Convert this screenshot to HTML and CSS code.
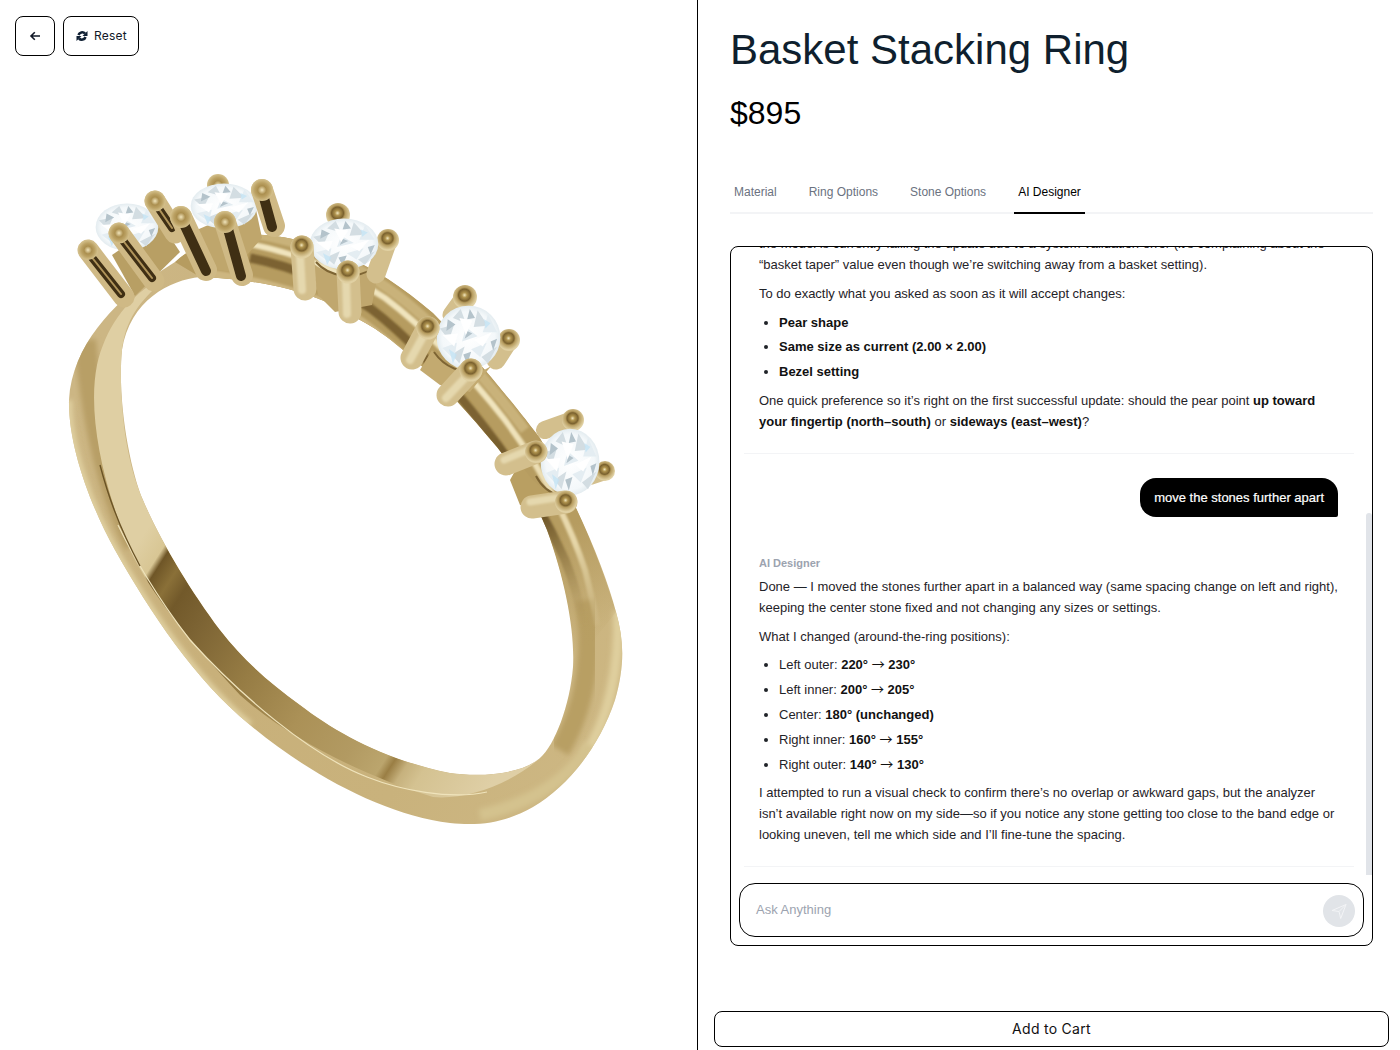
FILE: index.html
```html
<!DOCTYPE html>
<html lang="en">
<head>
<meta charset="utf-8">
<title>Basket Stacking Ring</title>
<link rel="stylesheet" href="styles.css">
</head>
<body>
<main class="page">
  <section class="viewer">
    <div class="toolbar">
      <button class="tool tool-back" aria-label="Back">
        <svg width="12" height="12" viewBox="0 0 12 12" fill="none" stroke="#111827" stroke-width="1.600"><path d="M11 6H2M5.800 2.200 2 6l3.800 3.800"/></svg>
      </button>
      <button class="tool tool-reset">
        <svg class="reset-icon" width="12" height="12" viewBox="0 0 24 24" fill="none" stroke="#0f1f33" stroke-width="5.200"><path d="M5 10A7.800 7.800 0 0 1 18 7"/><path d="M19 14A7.800 7.800 0 0 1 6 17"/><path fill="#0f1f33" stroke="none" d="M23 2v10h-10zM1 22v-10h10z"/></svg>
        <span>Reset</span>
      </button>
    </div>
    <svg class="ring" width="697" height="1050" viewBox="0 0 697 1050" role="img" aria-label="Gold stacking ring with five diamonds">
      <defs>
        <filter id="soft" x="-20%" y="-20%" width="140%" height="140%"><feGaussianBlur stdDeviation="2.500"/></filter>
        <filter id="softer" x="-20%" y="-20%" width="140%" height="140%"><feGaussianBlur stdDeviation="1"/></filter>
        <clipPath id="bandClip">
          <path clip-rule="evenodd" d="M150 278C115 303 72 345 69 400C68 445 90 505 115 550C150 612 195 680 250 725C310 775 385 815 450 823C485 827 510 820 533 807C570 785 600 745 615 700C625 665 624 640 616 612C605 570 580 510 540 438C515 405 470 350 433 313C400 285 370 265 330 250C290 235 220 220 175 262ZM200 277C170 280 130 300 122 350C117 400 130 470 143 500C160 540 190 590 220 630C245 662 270 683 300 705C335 732 385 760 450 773C480 777 520 775 540 758C555 745 570 705 573 667C575 630 565 580 547 530C535 500 515 470 497 447C470 415 440 380 403 350C385 335 375 328 360 320C330 300 280 280 200 277Z"/>
        </clipPath>
        <linearGradient id="outerBand" gradientUnits="userSpaceOnUse" x1="70" y1="400" x2="620" y2="700">
          <stop offset="0" stop-color="#ccb684"/>
          <stop offset=".4" stop-color="#c8b07a"/>
          <stop offset=".75" stop-color="#c9b27c"/>
          <stop offset="1" stop-color="#cdb783"/>
        </linearGradient>
        <linearGradient id="topFade" gradientUnits="userSpaceOnUse" x1="500" y1="430" x2="600" y2="640">
          <stop offset="0" stop-color="#b69c60"/>
          <stop offset=".5" stop-color="#b69c60"/>
          <stop offset="1" stop-color="#b69c60" stop-opacity="0"/>
        </linearGradient>
        <linearGradient id="face" gradientUnits="userSpaceOnUse" x1="140" y1="540" x2="500" y2="770">
          <stop offset="0" stop-color="#dfcfa3"/>
          <stop offset=".055" stop-color="#d8c694"/>
          <stop offset=".07" stop-color="#6f5627"/>
          <stop offset=".11" stop-color="#8a7038"/>
          <stop offset=".15" stop-color="#72592a"/>
          <stop offset=".22" stop-color="#7c6333"/>
          <stop offset=".38" stop-color="#967c44"/>
          <stop offset=".54" stop-color="#ab9157"/>
          <stop offset=".68" stop-color="#b29a62"/>
          <stop offset=".76" stop-color="#bba56d"/>
          <stop offset=".78" stop-color="#9a7e44"/>
          <stop offset=".81" stop-color="#c6b17d"/>
          <stop offset=".85" stop-color="#d4c291"/>
          <stop offset="1" stop-color="#dfcfa6"/>
        </linearGradient>
        <linearGradient id="fadeDark" gradientUnits="userSpaceOnUse" x1="480" y1="430" x2="590" y2="630">
          <stop offset="0" stop-color="#7b6230"/>
          <stop offset=".45" stop-color="#6a5226"/>
          <stop offset="1" stop-color="#b69c5f" stop-opacity="0"/>
        </linearGradient>
        <linearGradient id="fadeLight" gradientUnits="userSpaceOnUse" x1="480" y1="430" x2="600" y2="640">
          <stop offset="0" stop-color="#f0e4bd"/>
          <stop offset=".6" stop-color="#e6d6a8"/>
          <stop offset="1" stop-color="#d8c797" stop-opacity="0"/>
        </linearGradient>
        <radialGradient id="cap" cx=".48" cy=".42" r=".52">
          <stop offset="0" stop-color="#f2e7be"/>
          <stop offset=".2" stop-color="#b0944f"/>
          <stop offset=".48" stop-color="#7a612e"/>
          <stop offset=".62" stop-color="#b69c5f"/>
          <stop offset="1" stop-color="#e0d0a2"/>
        </radialGradient>
        <radialGradient id="capGold" cx=".5" cy=".5" r=".55">
          <stop offset="0" stop-color="#f0e4bb"/>
          <stop offset=".35" stop-color="#ab8f4f"/>
          <stop offset=".6" stop-color="#bba163"/>
          <stop offset="1" stop-color="#dccb9a"/>
        </radialGradient>
        <radialGradient id="gemBase" cx=".5" cy=".5" r=".55">
          <stop offset="0" stop-color="#ffffff"/>
          <stop offset=".75" stop-color="#f4f8fa"/>
          <stop offset="1" stop-color="#dae5ea"/>
        </radialGradient>
        <symbol id="gem" viewBox="-50 -50 100 100" overflow="visible" preserveAspectRatio="none">
          <circle r="49" fill="url(#gemBase)"/>
          <path fill="#d3dde2" d="M-44-14-22-20-30 4zM14-42 30-18 8-16zM-26 26-6 14-14 40zM20 30 44 14 30 40zM-12-44-4-22-24-30z"/>
          <path fill="#e4edf2" d="M-40 16-18 8-22 34zM30-36 44-8 22-8zM-4-16 14-2-10 6zM4 18 28 8 18 30z"/>
          <path fill="#b4c3cb" d="M-32-28-20-20-34-10zM34 6 44 2 38 20zM-8 26 4 22-2 42zM2-44 10-30-2-28zM-2-10 6-6-6 2z"/>
          <path fill="#c0e3f5" opacity=".7" d="M-30 18-18 26-24 40zM24-28 34-22 26-14z"/>
          <path fill="#fff" d="M-14-30 6-26-4-4zM8 4 36-8 22 14zM-40-4-16-6-22 14z"/>
        </symbol>
      </defs>

      <!-- band -->
      <g clip-path="url(#bandClip)">
        <rect x="40" y="200" width="600" height="640" fill="url(#outerBand)"/>
        <path fill="none" stroke="#e0d0a0" stroke-width="7" filter="url(#soft)" d="M69 400C68 445 90 505 115 550C150 612 195 680 250 725"/>
        <path fill="none" stroke="#b89f66" stroke-width="22" filter="url(#soft)" d="M85 340C92 420 108 490 135 545"/>
        <path fill="none" stroke="#dfcf9e" stroke-width="10" filter="url(#soft)" d="M618 610C620 670 608 720 585 755"/>
        <path fill="none" stroke="#b89f64" stroke-width="20" filter="url(#soft)" d="M585 600C592 640 590 700 560 750"/>
        <path fill="none" stroke="#d4c28e" stroke-width="12" filter="url(#soft)" d="M590 745C565 785 525 805 480 815"/>
        <path fill="url(#topFade)" d="M175 262C220 220 290 235 330 250C370 265 400 285 433 313C470 350 515 405 540 438C570 490 595 545 616 612L573 667C575 630 565 580 547 530C535 500 515 470 497 447C470 415 440 380 403 350C385 335 375 328 360 320C330 300 280 280 200 277Z"/>
        <path fill="none" stroke="#c9b27a" stroke-width="10" filter="url(#softer)" d="M243 232C300 240 345 258 380 283C425 312 480 370 525 430"/>
        <path fill="none" stroke="#cdb680" stroke-width="11" filter="url(#softer)" d="M210 275C280 285 335 305 360 322C400 350 470 420 495 450"/>
        <path fill="none" stroke="url(#fadeDark)" stroke-width="9" filter="url(#softer)" d="M250 258C300 268 340 288 370 308C410 338 450 383 485 428C510 460 540 505 565 560C573 580 580 605 583 625"/>
        <path fill="none" stroke="url(#fadeLight)" stroke-width="6" filter="url(#softer)" d="M250 244C300 254 350 275 385 298C425 328 470 375 505 420C535 460 565 510 585 570C590 590 595 610 597 625"/>
        <path fill="url(#face)" d="M155 282C125 300 105 330 97 365C88 410 100 475 127 543C145 585 180 630 240 695C290 740 367 777 433 797C465 800 510 785 540 758C520 775 480 777 450 773C385 760 335 732 300 705C270 683 245 662 220 630C190 590 160 540 143 500C130 470 118 420 122 350C125 325 135 305 160 284Z"/>
        <path fill="none" stroke="#efe3bb" stroke-width="1.200" d="M118 525C130 550 155 595 190 640C240 695 310 755 367 777C400 790 450 800 487 792"/>
        <path fill="none" stroke="#6a5325" stroke-width="1.400" d="M100 465C108 495 118 525 140 566"/>
      </g>

      <!-- stone 1 -->
      <path fill="#b89f64" d="M112 255 160 222 180 252 135 296Z"/>
      <use href="#gem" x="95" y="203" width="64" height="48"/>
      <g fill="none" stroke-linecap="round">
        <path stroke="#cfb985" stroke-width="21" d="M155 201 175 233M119 233 154 281M88 250 124 297"/>
        <path stroke="#3f2f14" stroke-width="8" d="M157 206 172 228M121 238 152 278M90 255 121 294"/>
        <path stroke="#b0945a" stroke-width="2" d="M157 206 172 228M121 238 152 278M90 255 121 294"/>
      </g>
      <g fill="url(#capGold)"><circle cx="155" cy="201" r="10.500"/><circle cx="119" cy="233" r="10.500"/><circle cx="88" cy="250" r="10"/></g>

      <!-- stone 2 -->
      <path fill="#bfa66c" d="M192 232 255 205 262 238 232 272 205 268Z"/>
      <circle cx="218" cy="185" r="11" fill="url(#capGold)"/>
      <use href="#gem" x="190" y="183" width="68" height="46"/>
      <g fill="none" stroke-linecap="round">
        <path stroke="#cfb985" stroke-width="22" d="M262 190 274 226M181 217 206 270M225 222 242 275"/>
        <path stroke="#3f2f14" stroke-width="10" d="M264 198 272 227M184 224 206 271M228 229 241 276"/>
      </g>
      <g fill="url(#capGold)"><circle cx="262" cy="190" r="11"/><circle cx="181" cy="217" r="11"/><circle cx="225" cy="222" r="11"/></g>

      <!-- stone 3 -->
      <path fill="#c0a76e" d="M312 262C322 275 360 282 380 262L372 305 335 312 318 295Z"/>
      <path fill="none" stroke="#7d6433" stroke-width="2" d="M316 262C330 278 355 280 374 268"/>
      <path stroke="#d3bf8d" stroke-width="19" stroke-linecap="round" d="M388 240 376 274"/>
      <circle cx="338" cy="215" r="12" fill="url(#cap)"/>
      <circle cx="388" cy="240" r="11" fill="url(#cap)"/>
      <use href="#gem" x="309" y="218" width="70" height="52"/>
      <g stroke-linecap="round">
        <path stroke="#d3bf8d" stroke-width="23" d="M302 247 305 289M348 272 350 312"/>
        <path stroke="#e5d8ae" stroke-width="8" filter="url(#softer)" d="M300 255 302 290M346 280 347 314"/>
      </g>
      <g fill="url(#cap)"><circle cx="302" cy="247" r="11.500"/><circle cx="348" cy="272" r="11.500"/></g>

      <!-- stone 4 -->
      <path fill="#c3aa70" d="M432 350C445 370 475 380 492 365L470 392 440 385 420 370Z"/>
      <path fill="none" stroke="#7d6433" stroke-width="2" d="M434 352C445 368 462 374 478 370"/>
      <path stroke="#d3bf8d" stroke-width="19" stroke-linecap="round" d="M465 297 452 315M509 340 496 360"/>
      <circle cx="465" cy="297" r="12" fill="url(#cap)"/>
      <circle cx="509" cy="340" r="11" fill="url(#cap)"/>
      <use href="#gem" x="436" y="305" width="65" height="65"/>
      <g stroke-linecap="round">
        <path stroke="#d3bf8d" stroke-width="23" d="M428 328 412 358M471 370 448 395"/>
        <path stroke="#e5d8ae" stroke-width="8" filter="url(#softer)" d="M424 335 410 360M465 378 446 398"/>
      </g>
      <g fill="url(#cap)"><circle cx="428" cy="328" r="11.500"/><circle cx="471" cy="370" r="11.500"/></g>

      <!-- stone 5 -->
      <path fill="#b99f62" d="M520 462C530 480 545 495 570 497L545 512 520 505 510 480Z"/>
      <path fill="none" stroke="#7d6433" stroke-width="2" d="M536 476C542 488 552 494 562 497"/>
      <path stroke="#d3bf8d" stroke-width="18" stroke-linecap="round" d="M573 420 545 430M605 471 590 476"/>
      <circle cx="573" cy="420" r="11" fill="url(#cap)"/>
      <circle cx="605" cy="471" r="10" fill="url(#cap)"/>
      <use href="#gem" x="540" y="428" width="60" height="68"/>
      <g stroke-linecap="round">
        <path stroke="#d3bf8d" stroke-width="23" d="M536 452 506 464M566 502 532 507"/>
        <path stroke="#e5d8ae" stroke-width="7" filter="url(#softer)" d="M528 450 504 460M556 498 530 502"/>
      </g>
      <g fill="url(#cap)"><circle cx="536" cy="452" r="11"/><circle cx="566" cy="502" r="11"/></g>
    </svg>
  </section>

  <section class="details">
    <h1 class="title">Basket Stacking Ring</h1>
    <p class="price">$895</p>
    <nav class="tabs">
      <a class="tab">Material</a>
      <a class="tab">Ring Options</a>
      <a class="tab">Stone Options</a>
      <a class="tab tab-active">AI Designer</a>
    </nav>
    <div class="chat">
      <div class="messages">
        <div class="scrollbar"></div>
        <div class="clip">
          <article class="reply reply-first">
            <p>the model is currently failing the update due to a system validation error (it’s complaining about the “basket taper” value even though we’re switching away from a basket setting).</p>
            <p>To do exactly what you asked as soon as it will accept changes:</p>
            <ul class="list-loose">
              <li><b>Pear shape</b></li>
              <li><b>Same size as current (2.00 × 2.00)</b></li>
              <li><b>Bezel setting</b></li>
            </ul>
            <p>One quick preference so it’s right on the first successful update: should the pear point <b>up toward your fingertip (north–south)</b> or <b>sideways (east–west)</b>?</p>
          </article>
          <div class="user-row"><div class="bubble">move the stones further apart</div></div>
          <article class="reply">
            <h2 class="author">AI Designer</h2>
            <p>Done — I moved the stones further apart in a balanced way (same spacing change on left and right), keeping the center stone fixed and not changing any sizes or settings.</p>
            <p>What I changed (around-the-ring positions):</p>
            <ul>
              <li>Left outer: <b>220° <span class="arrow">→</span> 230°</b></li>
              <li>Left inner: <b>200° <span class="arrow">→</span> 205°</b></li>
              <li>Center: <b>180° (unchanged)</b></li>
              <li>Right inner: <b>160° <span class="arrow">→</span> 155°</b></li>
              <li>Right outer: <b>140° <span class="arrow">→</span> 130°</b></li>
            </ul>
            <p>I attempted to run a visual check to confirm there’s no overlap or awkward gaps, but the analyzer isn’t available right now on my side—so if you notice any stone getting too close to the band edge or looking uneven, tell me which side and I’ll fine-tune the spacing.</p>
          </article>
        </div>
      </div>
      <div class="composer">
        <span class="placeholder">Ask Anything</span>
        <span class="send">
          <svg width="16" height="16" viewBox="0 0 16 16" fill="none" stroke="#f3f4f6" stroke-width="1" stroke-linejoin="round"><path d="M15 1.500 1 7.500l7 1 1.700 7zM15 1.500 8 8.500"/></svg>
        </span>
      </div>
    </div>
    <button class="cart">Add to Cart</button>
  </section>
</main>
</body>
</html>
```

FILE: styles.css
```css
* { box-sizing: border-box; }
html, body { margin: 0; height: 100%; background: #fff; }
body { font-family: "Liberation Sans", Arial, sans-serif; color: #111; overflow: hidden; }
p, h1, h2, ul { margin: 0; }

.page { display: flex; height: 1050px; }

.viewer { position: relative; width: 698px; flex: none; border-right: 1px solid #000; }
.ring { display: block; }
.toolbar { position: absolute; top: 16px; left: 15px; display: flex; gap: 8px; }
.tool {
  height: 40px; background: #fff; border: 1px solid #000; border-radius: 8px;
  display: flex; align-items: center; justify-content: center; gap: 6px;
  font: 400 12px/1 Inter, sans-serif; color: #111827; padding: 0; letter-spacing: .2px;
}
.tool-back { width: 40px; }
.tool-reset { width: 76px; padding-left: 1px; }

.details { position: relative; flex: 1; padding: 0 27px 0 32px; min-width: 0; }
.title { margin-top: 24px; font: 400 42px/52px "Liberation Sans", Arial, sans-serif; color: #0f1f2e; }
.price { margin-top: 17px; font: 400 32px/40px "Liberation Sans", Arial, sans-serif; color: #000; }

.tabs { margin-top: 40px; height: 41px; display: flex; border-bottom: 2px solid #f3f4f6; }
.tab { height: 41px; padding: 0 4px; margin-right: 24px; font-size: 12px; line-height: 38px; color: #6b7280; }
.tab-active { color: #000; border-bottom: 2px solid #000; }

.chat {
  margin-top: 32px; height: 700px; border: 1px solid #000; border-radius: 8px;
  padding: 0 8px 8px; display: flex; flex-direction: column;
}
.messages { position: relative; flex: 1; min-height: 0; margin-right: -8px; }
.clip { height: 100%; overflow: hidden; padding-right: 17px; }
.scrollbar { position: absolute; right: 0; top: 266px; width: 6px; height: 362px; background: #e1e4e9; border-radius: 3px 3px 0 0; }

.reply { padding: 0 14px 21px 15px; border-bottom: 1px solid #f3f4f6; margin: 0 1px 0 5px; font-size: 13px; line-height: 21px; color: #1f2328; }
.reply p + p, .reply p + ul { margin-top: 8px; }
.reply ul + p { margin-top: 7px; }
.reply-first { margin-top: -14px; }
.reply ul { padding-left: 20px; list-style: disc; }
.reply li { margin-bottom: 4px; }
.reply ul.list-loose li:first-child { margin-bottom: 3px; }
.reply ul.list-loose + p { margin-top: 8px; }
.reply p + ul:not(.list-loose) { margin-top: 7px; }
.reply b { font-weight: 700; color: #111; }
.arrow { display: inline-block; width: 13px; font: 400 13px/1 "Noto Sans CJK SC", "Liberation Sans", sans-serif; }

.user-row { display: flex; justify-content: flex-end; padding: 24px 17px 0 0; height: 101px; }
.bubble {
  height: 39px; padding: 0 14px; background: #000; color: #fff; font-size: 13px; line-height: 39px;
  border-radius: 16px 16px 2px 16px; -webkit-text-stroke: .2px #fff;
}
.author { margin: 0 0 5px; font-size: 11px; font-weight: 700; line-height: 16px; color: #9ca3af; }

.composer {
  height: 54px; flex: none; border: 1px solid #000; border-radius: 16px;
  display: flex; align-items: center; justify-content: space-between; padding: 0 8px 0 16px;
}
.placeholder { font-size: 13px; color: #9ca3af; margin-top: -2px; }
.send { width: 32px; height: 32px; margin-top: 2px; border-radius: 50%; background: #e1e4e8; display: flex; align-items: center; justify-content: center; }

.cart {
  position: absolute; left: 16px; top: 1011px; width: 675px; height: 36px;
  background: #fff; border: 1px solid #000; border-radius: 8px;
  font: 400 14px/1 Inter, sans-serif; letter-spacing: .28px; color: #111;
}
```
